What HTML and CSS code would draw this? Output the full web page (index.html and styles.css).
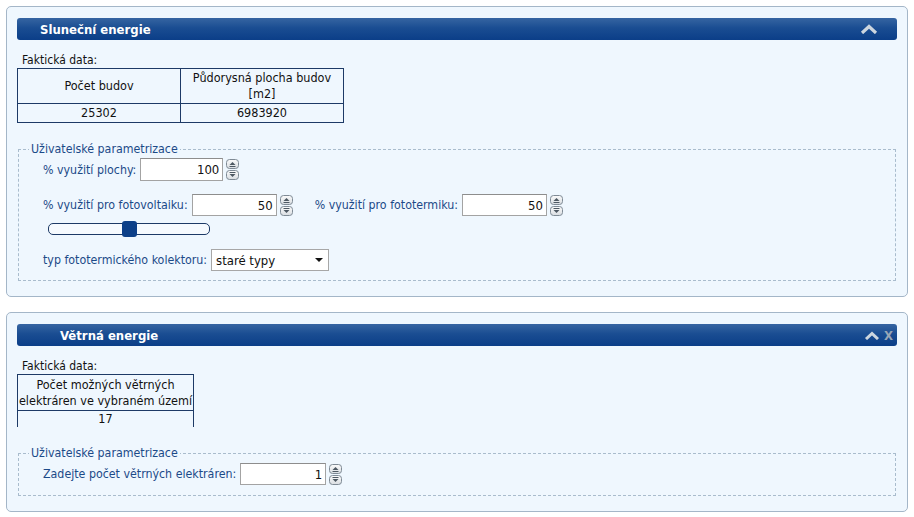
FILE: index.html
```html
<!DOCTYPE html>
<html lang="cs">
<head>
<meta charset="utf-8">
<title>Energie</title>
<link rel="stylesheet" href="styles.css">
</head>
<body>
<div class="panel">
  <div class="head">
    <span class="title">Sluneční energie</span>
    <span class="tools">
      <svg class="chev" width="18" height="10" viewBox="0 0 18 10"><polyline points="2,9 9,2.5 16,9" fill="none" stroke="#cdd6df" stroke-width="3.2"/></svg>
    </span>
  </div>
  <div class="caption">Faktická data:</div>
  <table class="facts t1">
    <tr><td>Počet budov</td><td>Půdorysná plocha budov<br>[m2]</td></tr>
    <tr><td>25302</td><td>6983920</td></tr>
  </table>
  <fieldset class="params">
    <legend>Uživatelské parametrizace</legend>
    <div class="row r1">
      <span class="lbl">% využití plochy:</span>
      <span class="num w83">100</span>
      <svg class="spin" width="13" height="21" viewBox="0 0 13 21"><defs><linearGradient id="g1" x1="0" y1="0" x2="0" y2="1"><stop offset="0" stop-color="#fbfbfb"/><stop offset="1" stop-color="#d9dde1"/></linearGradient></defs><rect x="0.5" y="0.5" width="12" height="9" rx="3" fill="url(#g1)" stroke="#7f8a95"/><polygon points="3.5,6 6.5,3 9.5,6" fill="#4d5862"/><line x1="3.5" y1="7.5" x2="9.5" y2="7.5" stroke="#4d5862"/><rect x="0.5" y="11.5" width="12" height="9" rx="3" fill="url(#g1)" stroke="#7f8a95"/><line x1="3.5" y1="13.5" x2="9.5" y2="13.5" stroke="#4d5862"/><polygon points="3.5,15 6.5,18 9.5,15" fill="#4d5862"/></svg>
    </div>
    <div class="row r2">
      <span class="lbl">% využití pro fotovoltaiku:</span>
      <span class="num w85">50</span>
      <svg class="spin" width="13" height="21" viewBox="0 0 13 21"><rect x="0.5" y="0.5" width="12" height="9" rx="3" fill="url(#g1)" stroke="#7f8a95"/><polygon points="3.5,6 6.5,3 9.5,6" fill="#4d5862"/><line x1="3.5" y1="7.5" x2="9.5" y2="7.5" stroke="#4d5862"/><rect x="0.5" y="11.5" width="12" height="9" rx="3" fill="url(#g1)" stroke="#7f8a95"/><line x1="3.5" y1="13.5" x2="9.5" y2="13.5" stroke="#4d5862"/><polygon points="3.5,15 6.5,18 9.5,15" fill="#4d5862"/></svg>
      <span class="lbl second">% využití pro fototermiku:</span>
      <span class="num w85">50</span>
      <svg class="spin" width="13" height="21" viewBox="0 0 13 21"><rect x="0.5" y="0.5" width="12" height="9" rx="3" fill="url(#g1)" stroke="#7f8a95"/><polygon points="3.5,6 6.5,3 9.5,6" fill="#4d5862"/><line x1="3.5" y1="7.5" x2="9.5" y2="7.5" stroke="#4d5862"/><rect x="0.5" y="11.5" width="12" height="9" rx="3" fill="url(#g1)" stroke="#7f8a95"/><line x1="3.5" y1="13.5" x2="9.5" y2="13.5" stroke="#4d5862"/><polygon points="3.5,15 6.5,18 9.5,15" fill="#4d5862"/></svg>
    </div>
    <div class="slider"><div class="track"><div class="thumb"></div></div></div>
    <div class="row r3">
      <span class="lbl">typ fototermického kolektoru:</span>
      <span class="select"><span>staré typy</span><svg width="8" height="4" viewBox="0 0 8 4"><polygon points="0,0 8,0 4,4" fill="#111"/></svg></span>
    </div>
  </fieldset>
</div>

<div class="panel p2">
  <div class="head h2">
    <span class="title">Větrná energie</span>
    <span class="tools">
      <svg class="chev" width="16" height="9" viewBox="0 0 16 9"><polyline points="2,8 8,2.5 14,8" fill="none" stroke="#cdd6df" stroke-width="3"/></svg>
      <span class="close">X</span>
    </span>
  </div>
  <div class="caption">Faktická data:</div>
  <table class="facts t2">
    <tr><td>Počet možných větrných<br>elektráren ve vybraném území</td></tr>
    <tr><td>17</td></tr>
  </table>
  <fieldset class="params f2">
    <legend>Uživatelské parametrizace</legend>
    <div class="row r4">
      <span class="lbl">Zadejte počet větrných elektráren:</span>
      <span class="num w86">1</span>
      <svg class="spin" width="13" height="21" viewBox="0 0 13 21"><rect x="0.5" y="0.5" width="12" height="9" rx="3" fill="url(#g1)" stroke="#7f8a95"/><polygon points="3.5,6 6.5,3 9.5,6" fill="#4d5862"/><line x1="3.5" y1="7.5" x2="9.5" y2="7.5" stroke="#4d5862"/><rect x="0.5" y="11.5" width="12" height="9" rx="3" fill="url(#g1)" stroke="#7f8a95"/><line x1="3.5" y1="13.5" x2="9.5" y2="13.5" stroke="#4d5862"/><polygon points="3.5,15 6.5,18 9.5,15" fill="#4d5862"/></svg>
    </div>
  </fieldset>
</div>
</body>
</html>
```

FILE: styles.css
```css
html, body {
  margin: 0;
  background: #ffffff;
}
body {
  padding: 6px;
  font-family: "DejaVu Sans Condensed", "DejaVu Sans", Verdana, sans-serif;
  font-stretch: semi-condensed;
  font-size: 12px;
  color: #222;
}
.panel {
  border: 1px solid #a4b6c8;
  border-radius: 5px;
  background: #eff7fe;
  padding: 11px 10px 15px;
  margin-bottom: 15px;
}
.p2 {
  padding-top: 11px;
}
.head {
  height: 22px;
  border-radius: 3px;
  background: linear-gradient(to bottom, #3665a2 0%, #1a4d92 45%, #0b3e88 100%);
  display: flex;
  align-items: center;
  justify-content: space-between;
  padding: 0 19px 0 23px;
}
.head.h2 {
  padding-left: 43px;
  padding-right: 4px;
}
.title {
  color: #fff;
  font-weight: bold;
  font-size: 13px;
}
.tools {
  display: flex;
  align-items: center;
  gap: 4px;
}
.chev {
  display: block;
}
.close {
  color: #98a6b6;
  font-weight: bold;
  font-size: 13px;
}
.caption {
  margin: 12px 0 0 5px;
  height: 16px;
  line-height: 16px;
  color: #111;
}
.facts {
  border-collapse: collapse;
  font-size: 12.5px;
  color: #111;
}
.facts td {
  border: 1px solid #1d3a66;
  text-align: center;
  line-height: 16px;
  padding: 1px 0;
  white-space: nowrap;
}
.t1 td {
  width: 162px;
}
.t2 td {
  width: 175px;
  padding: 2px 0 1px;
}
.t2 tr:last-child td {
  border-bottom: none;
  padding: 0;
}
.params {
  margin: 19px 1px 0;
  border: 1px dashed #a9bccd;
  padding: 2px 10px 9px;
  font-size: 12.3px;
}
.params legend {
  padding: 0 2px;
  line-height: 14px;
  color: #1c4a88;
}
.row {
  display: flex;
  align-items: center;
  margin-left: 14px;
  color: #1c4a88;
}
.r1 { height: 23px; }
.r2 { height: 22px; margin-top: 13px; }
.r3 { height: 22px; margin-top: 12px; }
.r4 { height: 22px; margin-top: 1px; }
.lbl {
  margin-right: 4px;
}
.second {
  margin-left: 22px;
}
.num {
  box-sizing: border-box;
  height: 100%;
  border: 1px solid #a3a3a3;
  border-top-color: #8d8d8d;
  background: #fff;
  color: #111;
  padding-right: 3px;
  font-size: 13px;
  display: flex;
  align-items: center;
  justify-content: flex-end;
}
.w83 { width: 83px; }
.w85 { width: 85px; }
.w86 { width: 86px; }
.spin {
  margin-left: 3px;
  display: block;
}
.slider {
  margin: 5px 0 0 19px;
  height: 16px;
  display: flex;
  align-items: center;
}
.track {
  position: relative;
  box-sizing: border-box;
  width: 162px;
  height: 12px;
  border: 1px solid #1d3a66;
  border-radius: 5px;
  background: #f6fafe;
}
.thumb {
  position: absolute;
  left: 73px;
  top: -3px;
  width: 15px;
  height: 16px;
  border-radius: 3px;
  background: #0c3f88;
}
.select {
  box-sizing: border-box;
  width: 118px;
  height: 22px;
  border: 1px solid #a7a7a7;
  background: #fff;
  color: #111;
  font-size: 13px;
  display: flex;
  align-items: center;
  justify-content: space-between;
  padding: 0 5px 0 4px;
}
.f2 {
  padding-bottom: 10px;
}
```
